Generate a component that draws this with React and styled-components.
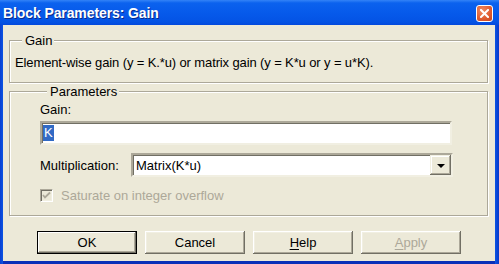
import React from "react";
import styled, { createGlobalStyle } from "styled-components";

const GlobalStyle = createGlobalStyle`
  html, body {
    margin: 0;
    padding: 0;
    background: #ece9d8;
  }
  * {
    box-sizing: border-box;
  }
`;

const Window = styled.div`
  width: 499px;
  height: 264px;
  display: flex;
  flex-direction: column;
  background: linear-gradient(to right, #0a3fd0, #0a54e4 3px, #0a54e4 495px, #0838c8);
  font-family: "Liberation Sans", Arial, sans-serif;
  font-size: 13px;
  color: #000;
  overflow: hidden;
`;

const TitleBar = styled.div`
  height: 25px;
  flex: none;
  display: flex;
  align-items: center;
  justify-content: space-between;
  padding: 0 6px 0 3px;
  background: linear-gradient(to bottom, #3383f7 0px, #0b62ee 3px, #0659ea 14px, #0453e4 22px, #0349dc 25px);
`;

const Title = styled.div`
  color: #fff;
  font-weight: bold;
  font-size: 14px;
  letter-spacing: -0.1px;
  text-shadow: 1px 1px 0 #0a2a8a;
  margin-top: 1px;
`;

const CloseButton = styled.div`
  width: 17px;
  height: 17px;
  border: 1px solid #fff;
  border-radius: 3px;
  background: radial-gradient(circle at 35% 30%, #f08a62, #df5a2e 60%, #c64420);
  display: flex;
  align-items: center;
  justify-content: center;
  margin-top: 1px;
`;

const Client = styled.div`
  flex: 1;
  margin: 0 4px 3px 3px;
  background: #ece9d8;
  display: flex;
  flex-direction: column;
  padding: 8px 7px 0 6px;
  box-shadow: 0 3px 0 #0a2fb8;
`;

const GroupBox = styled.fieldset`
  margin: ${(p) => (p.$top ? `${p.$top}px` : "0")} 0 0 0;
  padding: ${(p) => p.$pad};
  border: 1px solid #aca899;
  box-shadow: inset 1px 1px 0 #fff, 1px 1px 0 #fff;
  min-width: 0;
`;

const Legend = styled.legend`
  margin-left: 7px;
  padding: 0 2px 0 3px;
  line-height: 15px;
  background: #ece9d8;
`;

const Description = styled.div`
  line-height: 15px;
  white-space: nowrap;
  letter-spacing: -0.12px;
`;

const FieldLabel = styled.div`
  line-height: 15px;
  margin-top: 1px;
`;

const EditBox = styled.div`
  width: 412px;
  height: 24px;
  margin-top: 4px;
  background: #fff;
  border: 2px solid;
  border-color: #aca899 #f1efe2 #f1efe2 #aca899;
  box-shadow: inset 1px 1px 0 #716f64;
  display: flex;
  align-items: center;
  padding-left: 1px;
`;

const Selected = styled.span`
  background: #316ac5;
  color: #fff;
  line-height: 16px;
  padding: 0 1px;
`;

const ComboRow = styled.div`
  display: flex;
  align-items: center;
  margin-top: 8px;
`;

const ComboLabel = styled.div`
  width: 91px;
  line-height: 15px;
`;

const Combo = styled.div`
  width: 322px;
  height: 24px;
  background: #fff;
  border: 2px solid;
  border-color: #aca899 #f1efe2 #f1efe2 #aca899;
  box-shadow: inset 1px 1px 0 #716f64;
  display: flex;
  align-items: center;
  justify-content: space-between;
  padding: 1px 0 0 3px;
`;

const DropButton = styled.div`
  width: 21px;
  height: 20px;
  margin: 0 0 1px 0;
  background: #ece9d8;
  box-shadow: inset -1px -1px 0 #716f64, inset 1px 1px 0 #f1efe2, inset -2px -2px 0 #aca899, inset 2px 2px 0 #fff;
  display: flex;
  align-items: center;
  justify-content: center;
`;

const Arrow = styled.div`
  width: 0;
  height: 0;
  border-left: 4px solid transparent;
  border-right: 4px solid transparent;
  border-top: 4px solid #000;
  margin-top: 1px;
`;

const CheckRow = styled.label`
  display: flex;
  align-items: center;
  gap: 8px;
  margin-top: 11px;
  color: #aca899;
  line-height: 15px;
`;

const CheckBox = styled.div`
  width: 13px;
  height: 13px;
  border: 1px solid;
  border-color: #aca899 #fff #fff #aca899;
  box-shadow: inset 1px 1px 0 #716f64, inset -1px -1px 0 #f1efe2;
  background: #ece9d8;
  display: flex;
  align-items: center;
  justify-content: center;
`;

const ButtonRow = styled.div`
  display: flex;
  gap: 8px;
  padding-left: 28px;
  margin-top: 15px;
`;

const Button = styled.div`
  width: 100px;
  height: 23px;
  display: flex;
  align-items: center;
  justify-content: center;
  background: #ece9d8;
  color: ${(p) => (p.$disabled ? "#aca899" : "#000")};
  border: ${(p) => (p.$default ? "1px solid #000" : "none")};
  box-shadow: ${(p) =>
    p.$default
      ? "inset -1px -1px 0 #716f64, inset 1px 1px 0 #fff, inset -2px -2px 0 #aca899"
      : "inset -1px -1px 0 #716f64, inset 1px 1px 0 #fff, inset -2px -2px 0 #aca899, inset 2px 2px 0 #f1efe2"};
  u {
    text-decoration: underline;
    text-underline-offset: 2px;
  }
`;

const App = () => {
  return (
    <>
      <GlobalStyle />
      <Window>
        <TitleBar>
          <Title>Block Parameters: Gain</Title>
          <CloseButton>
            <svg width="9" height="9" viewBox="0 0 9 9">
              <path d="M1 1 L8 8 M8 1 L1 8" stroke="#fff" strokeWidth="2" strokeLinecap="square" />
            </svg>
          </CloseButton>
        </TitleBar>
        <Client>
          <GroupBox $pad="7px 4px 12px 5px">
            <Legend>Gain</Legend>
            <Description>Element-wise gain (y = K.*u) or matrix gain (y = K*u or y = u*K).</Description>
          </GroupBox>
          <GroupBox $top={1} $pad="2px 4px 12px 30px">
            <Legend>Parameters</Legend>
            <FieldLabel>Gain:</FieldLabel>
            <EditBox>
              <Selected>K</Selected>
            </EditBox>
            <ComboRow>
              <ComboLabel>Multiplication:</ComboLabel>
              <Combo>
                <span>Matrix(K*u)</span>
                <DropButton>
                  <Arrow />
                </DropButton>
              </Combo>
            </ComboRow>
            <CheckRow>
              <CheckBox>
                <svg width="9" height="9" viewBox="0 0 9 9">
                  <path d="M1 4 L3 6.5 L8 1.5" stroke="#aca899" strokeWidth="1.8" fill="none" />
                </svg>
              </CheckBox>
              Saturate on integer overflow
            </CheckRow>
          </GroupBox>
          <ButtonRow>
            <Button $default>OK</Button>
            <Button>Cancel</Button>
            <Button>
              <span>
                <u>H</u>elp
              </span>
            </Button>
            <Button $disabled>
              <span>
                <u>A</u>pply
              </span>
            </Button>
          </ButtonRow>
        </Client>
      </Window>
    </>
  );
};

export default App;
